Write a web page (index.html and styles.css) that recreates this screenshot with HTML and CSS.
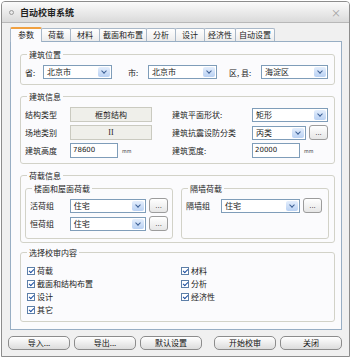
FILE: index.html
```html
<!DOCTYPE html>
<html lang="zh-CN">
<head>
    <meta charset="UTF-8">
    <title>自动校审系统</title>
    <link rel="stylesheet" href="styles.css">
</head>
<body>
    <div class="window">
        <div class="titlebar">
            <span class="title-icon"></span>
            <span class="title">自动校审系统</span>
            <span class="close">×</span>
        </div>

        <div class="client">
            <!-- 选项卡 -->
            <div class="tabs">
                <div class="tab active">参数</div>
                <div class="tab">荷载</div>
                <div class="tab">材料</div>
                <div class="tab">截面和布置</div>
                <div class="tab">分析</div>
                <div class="tab">设计</div>
                <div class="tab">经济性</div>
                <div class="tab">自动设置</div>
            </div>

            <div class="panel">
                <!-- 建筑位置 -->
                <fieldset class="group">
                    <legend>建筑位置</legend>
                    <div class="loc-row">
                        <span class="lbl lbl-prov">省:</span>
                        <div class="select w-69">北京市<i class="drop"></i></div>
                        <span class="lbl lbl-city">市:</span>
                        <div class="select w-69">北京市<i class="drop"></i></div>
                        <span class="lbl lbl-county">区, 县:</span>
                        <div class="select w-67">海淀区<i class="drop"></i></div>
                    </div>
                </fieldset>

                <!-- 建筑信息 -->
                <fieldset class="group">
                    <legend>建筑信息</legend>
                    <div class="info-grid">
                        <span class="lbl">结构类型</span>
                        <div class="readonly">框剪结构</div>
                        <span class="lbl">建筑平面形状:</span>
                        <div class="select w-76">矩形<i class="drop"></i></div>

                        <span class="lbl">场地类别</span>
                        <div class="readonly roman">II</div>
                        <span class="lbl">建筑抗震设防分类</span>
                        <div class="field-pair">
                            <div class="select w-54">丙类<i class="drop"></i></div>
                            <button class="more">...</button>
                        </div>

                        <span class="lbl">建筑高度</span>
                        <div class="field-pair">
                            <div class="input">78600</div>
                            <span class="unit">mm</span>
                        </div>
                        <span class="lbl">建筑宽度:</span>
                        <div class="field-pair">
                            <div class="input">20000</div>
                            <span class="unit">mm</span>
                        </div>
                    </div>
                </fieldset>

                <!-- 荷载信息 -->
                <fieldset class="group group-load">
                    <legend>荷载信息</legend>
                    <div class="load-cols">
                        <fieldset class="group inner inner-left">
                            <legend>楼面和屋面荷载</legend>
                            <div class="load-row">
                                <span class="lbl lbl-load">活荷组</span>
                                <div class="select w-77">住宅<i class="drop"></i></div>
                                <button class="more">...</button>
                            </div>
                            <div class="load-row">
                                <span class="lbl lbl-load">恒荷组</span>
                                <div class="select w-77">住宅<i class="drop"></i></div>
                                <button class="more">...</button>
                            </div>
                        </fieldset>
                        <fieldset class="group inner inner-right">
                            <legend>隔墙荷载</legend>
                            <div class="load-row">
                                <span class="lbl lbl-wall">隔墙组</span>
                                <div class="select w-79">住宅<i class="drop"></i></div>
                                <button class="more">...</button>
                            </div>
                        </fieldset>
                    </div>
                </fieldset>

                <!-- 选择校审内容 -->
                <fieldset class="group group-check">
                    <legend>选择校审内容</legend>
                    <div class="check-cols">
                        <div class="check-col">
                            <label class="check"><span class="box"></span>荷载</label>
                            <label class="check"><span class="box"></span>截面和结构布置</label>
                            <label class="check"><span class="box"></span>设计</label>
                            <label class="check"><span class="box"></span>其它</label>
                        </div>
                        <div class="check-col">
                            <label class="check"><span class="box"></span>材料</label>
                            <label class="check"><span class="box"></span>分析</label>
                            <label class="check"><span class="box"></span>经济性</label>
                        </div>
                    </div>
                </fieldset>
            </div>

            <!-- 底部按钮 -->
            <div class="buttons">
                <button class="btn">导入...</button>
                <button class="btn">导出...</button>
                <button class="btn">默认设置</button>
                <button class="btn btn-start">开始校审</button>
                <button class="btn">关闭</button>
            </div>
        </div>
    </div>
</body>
</html>
```

FILE: styles.css
```css
* {
    box-sizing: border-box;
}

body {
    margin: 0;
    background: #ffffff;
    font-family: "Noto Sans CJK SC", "DejaVu Sans", sans-serif;
    font-size: 8px;
    line-height: 11px;
    color: #222;
}

.window {
    margin: 1px 0 0 1px;
    width: 349px;
    height: 356px;
    border: 1px solid #8d8d8d;
    border-radius: 4px 4px 0 0;
    background: #f0f0f0;
    display: flex;
    flex-direction: column;
    overflow: hidden;
}

.titlebar {
    height: 21px;
    display: flex;
    align-items: center;
    padding: 0 8px 0 7px;
    background: linear-gradient(#fbfbfb, #dadada);
    border-bottom: 1px solid #b8b8b8;
}

.title-icon {
    width: 5px;
    height: 5px;
    border: 1px solid #9a9a9a;
    border-radius: 50%;
    margin-right: 6px;
}

.title {
    flex: 1;
    font-weight: bold;
    font-size: 9px;
}

.close {
    color: #a0a0a0;
    font-size: 10px;
}

.client {
    flex: 1;
    padding: 4px 7px 0 8px;
    display: flex;
    flex-direction: column;
}

/* 选项卡 */
.tabs {
    display: flex;
    height: 14px;
    align-items: flex-end;
}

.tab {
    height: 13px;
    min-width: 30px;
    padding: 0 3px;
    text-align: center;
    line-height: 12px;
    border: 1px solid #a9b8c8;
    border-bottom: none;
    border-radius: 2px 2px 0 0;
    background: linear-gradient(#ffffff, #ececec);
    margin-right: -1px;
}

.tab.active {
    min-width: 32px;
    height: 15px;
    border-top: 2px solid #f0a040;
    background: #fbfbfd;
    position: relative;
    z-index: 1;
    margin-bottom: -1px;
}

.panel {
    height: 289px;
    border: 1px solid #98aec4;
    background: #fbfbfd;
    padding: 7px 6px 0 9px;
}

/* 分组框 */
.group {
    margin: 0 0 6px 0;
    padding: 2px 5px 5px 4px;
    border: 1px solid #d2d2c8;
    border-radius: 3px;
    min-width: 0;
}

.group legend {
    padding: 0 2px;
    margin-left: 2px;
    line-height: 11px;
}

.lbl {
    white-space: nowrap;
}

/* 下拉框 */
.select {
    height: 14px;
    border: 1px solid #7f9db9;
    background: #fff;
    display: flex;
    align-items: center;
    justify-content: space-between;
    padding-left: 3px;
    line-height: 12px;
}

.drop {
    width: 12px;
    height: 10px;
    margin-right: 1px;
    border-radius: 2px;
    background: linear-gradient(#e4eefc, #b9d1f3);
    position: relative;
}

.drop::after {
    content: "";
    position: absolute;
    left: 4px;
    top: 2px;
    width: 3px;
    height: 3px;
    border-right: 1.5px solid #3c5f94;
    border-bottom: 1.5px solid #3c5f94;
    transform: rotate(45deg);
}

.w-54 { width: 54px; }
.w-67 { width: 67px; }
.w-69 { width: 69px; }
.w-76 { width: 76px; }
.w-77 { width: 77px; }
.w-79 { width: 79px; }

.more {
    width: 19px;
    height: 15px;
    padding: 0;
    border: 1px solid #9c9c9c;
    border-radius: 3px;
    background: linear-gradient(#ffffff, #e6e6e6);
    font-family: "DejaVu Sans", sans-serif;
    font-size: 7px;
    line-height: 10px;
    color: #333;
}

/* 建筑位置 */
.loc-row {
    display: flex;
    align-items: center;
    padding-top: 3px;
}

.lbl-prov { width: 18px; }
.lbl-city { width: 20px; margin-left: 16px; }
.lbl-county { width: 32px; margin-left: 12px; }

/* 建筑信息 */
.info-grid {
    display: grid;
    grid-template-columns: 45px 82px 100px 76px;
    row-gap: 3px;
    padding-top: 3px;
    align-items: center;
}

.info-grid .lbl:nth-child(4n+3) {
    margin-left: 20px;
}

.readonly {
    height: 15px;
    border: 1px solid #cacac0;
    background: #efefea;
    text-align: center;
    line-height: 13px;
}

.roman {
    font-family: "Liberation Serif", serif;
}

.field-pair {
    display: flex;
    align-items: center;
    gap: 3px;
}

.input {
    width: 48px;
    height: 15px;
    border: 1px solid #7f9db9;
    background: #fff;
    padding-left: 2px;
    font-family: "DejaVu Sans", sans-serif;
    font-size: 7px;
    line-height: 13px;
}

.unit {
    font-size: 5px;
    margin-left: 1px;
    color: #444;
}

/* 荷载信息 */
.group-load {
    padding-bottom: 3px;
    margin-bottom: 4px;
}

.load-cols {
    display: flex;
    gap: 8px;
}

.group.inner {
    margin: 0;
    padding: 1px 4px 7px 4px;
}

.inner-left { width: 148px; }
.inner-right { flex: 1; }

.load-row {
    display: flex;
    align-items: center;
    gap: 3px;
    margin-top: 3px;
}

.lbl-load { width: 37px; }
.lbl-wall { width: 32px; }

/* 选择校审内容 */
.check-cols {
    display: flex;
    padding: 4px 0 0 2px;
}

.check-col {
    display: flex;
    flex-direction: column;
}

.check-col:first-child {
    width: 154px;
}

.check {
    display: flex;
    align-items: center;
    height: 13px;
}

.box {
    width: 8px;
    height: 8px;
    border: 1px solid #5d7fa8;
    background: #fff;
    margin-right: 2px;
    position: relative;
}

.box::after {
    content: "";
    position: absolute;
    left: 2px;
    top: 0;
    width: 2px;
    height: 4px;
    border-right: 1.5px solid #1f4fa0;
    border-bottom: 1.5px solid #1f4fa0;
    transform: rotate(45deg);
}

/* 底部按钮 */
.buttons {
    display: flex;
    gap: 4px;
    padding: 6px 0 0 0;
    margin-left: -2px;
}

.btn {
    width: 62px;
    height: 14px;
    padding: 0;
    border: 1px solid #8c8c8c;
    border-radius: 5px;
    background: linear-gradient(#ffffff, #dcdcdc);
    font-family: "Noto Sans CJK SC", sans-serif;
    font-size: 8px;
    line-height: 12px;
    color: #111;
}

.btn-start {
    margin-left: auto;
}
```
